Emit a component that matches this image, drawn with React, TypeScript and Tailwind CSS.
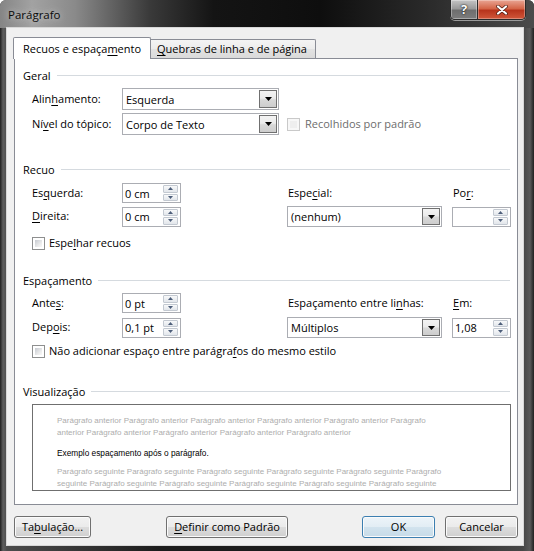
import React from "react";

const U = ({ children }: { children: React.ReactNode }) => (
  <span className="underline decoration-1 underline-offset-[2px]">{children}</span>
);

function Arrow() {
  return (
    <svg width="7" height="4" viewBox="0 0 7 4">
      <path d="M0 0h7L3.5 4z" fill="#000" />
    </svg>
  );
}

function Combo({ value, className }: { value: string; className: string }) {
  return (
    <div className={`flex items-center border border-[#abadb3] bg-white pl-[3px] pr-px ${className}`}>
      <span className="flex-1 leading-none">{value}</span>
      <div className="my-px flex w-[18px] items-center justify-center self-stretch border border-[#707070] bg-[linear-gradient(#f3f3f3,#ebebeb_45%,#d8d8d8_55%,#cdcdcd)]">
        <Arrow />
      </div>
    </div>
  );
}

function Spin({ value, className }: { value: string; className: string }) {
  return (
    <div className={`flex items-center border border-[#abadb3] bg-white pl-[2px] pr-[2px] ${className}`}>
      <span className="flex-1 leading-none">{value}</span>
      <div className="flex w-[15px] flex-col gap-px self-stretch py-px">
        <div className="flex flex-1 items-center justify-center rounded-[1px] border border-[#c3c9d1] bg-[linear-gradient(#f8f9fa,#e2e6eb)]">
          <svg width="5" height="3" viewBox="0 0 5 3">
            <path d="M0 3h5L2.5 0z" fill="#4d5e7a" />
          </svg>
        </div>
        <div className="flex flex-1 items-center justify-center rounded-[1px] border border-[#c3c9d1] bg-[linear-gradient(#f8f9fa,#e2e6eb)]">
          <svg width="5" height="3" viewBox="0 0 5 3">
            <path d="M0 0h5L2.5 3z" fill="#4d5e7a" />
          </svg>
        </div>
      </div>
    </div>
  );
}

function Check({ disabled }: { disabled?: boolean }) {
  return (
    <div
      className={`h-[13px] w-[13px] shrink-0 border p-[2px] ${
        disabled ? "border-[#c9c9c9] bg-[#f7f7f7]" : "border-[#8e8f8f] bg-white"
      }`}
    >
      <div
        className={`h-full w-full ${
          disabled ? "bg-[#eeeeee]" : "bg-[linear-gradient(135deg,#c6cad0,#eeeeee_70%,#f8f8f8)]"
        }`}
      />
    </div>
  );
}

function Group({ title, className }: { title: string; className: string }) {
  return (
    <div className={`flex h-[16px] items-center pl-[8px] pr-[7px] ${className}`}>
      <span className="leading-none">{title}</span>
      <div className="ml-[6px] h-px flex-1 bg-[#d5dadf]" />
    </div>
  );
}

function Btn({
  children,
  className,
  primary,
}: {
  children: React.ReactNode;
  className: string;
  primary?: boolean;
}) {
  return (
    <div
      className={`flex h-[22px] items-center justify-center rounded-[3px] border shadow-[inset_0_0_0_1px_#fbfbfb] ${
        primary
          ? "border-[#3c7fb1] bg-[linear-gradient(#edf4f9,#e2edf4_50%,#d2e3ee_50%,#c6dbe8)]"
          : "border-[#707070] bg-[linear-gradient(#f2f2f2,#ebebeb_50%,#dddddd_50%,#cfcfcf)]"
      } ${className}`}
    >
      {children}
    </div>
  );
}

const anterior1 =
  "Parágrafo anterior Parágrafo anterior Parágrafo anterior Parágrafo anterior Parágrafo anterior Parágrafo";
const anterior2 =
  "anterior Parágrafo anterior Parágrafo anterior Parágrafo anterior Parágrafo anterior";
const seguinte1 =
  "Parágrafo seguinte Parágrafo seguinte Parágrafo seguinte Parágrafo seguinte Parágrafo seguinte Parágrafo";
const seguinte2 =
  "seguinte Parágrafo seguinte Parágrafo seguinte Parágrafo seguinte Parágrafo seguinte Parágrafo seguinte";

export default function App() {
  return (
    <div className="h-[551px] w-[534px] overflow-hidden rounded-t-[6px] bg-[linear-gradient(to_right,#1e1e1e_0px,#5e5e5e_3px,#4c4c4c_7px,#1c1c1c_30%,#1c1c1c_70%,#474747_523px,#5a5a5a_530px,#202020_534px)] font-['Open_Sans',sans-serif] text-[11px] text-black">
      {/* title bar */}
      <div className="flex h-[28px] items-start justify-between bg-[linear-gradient(to_right,#858585,#a2a2a2_6%,#8a8a8a_14%,#3a3a3a_28%,#141414_40%,#0e0e0e_60%,#2a2a2a_80%,#4b4b4b)]">
        <div className="pl-[8px] pt-[7px] text-[11.5px] leading-[16px] text-[#0a0a0a] [text-shadow:0_0_7px_rgba(230,230,230,0.9)]">
          Parágrafo
        </div>
        <div className="mr-[8px] flex h-[20px] overflow-hidden rounded-b-[5px] border border-t-0 border-[#2a2a2a] shadow-[0_1px_0_#9a9a9a]">
          <div className="flex w-[27px] items-center justify-center border-r border-[#2a2a2a] bg-[linear-gradient(#c4c4c4,#9a9a9a_45%,#6e6e6e_55%,#7d7d7d)] shadow-[inset_0_0_0_1px_rgba(255,255,255,0.35)]">
            <span className="text-[13px] font-bold leading-none text-white [text-shadow:0_0_2px_#222,0_0_1px_#000]">?</span>
          </div>
          <div className="flex w-[47px] items-center justify-center bg-[linear-gradient(#e9a594,#d46548_45%,#b8341c_55%,#d1573a)] shadow-[inset_0_0_0_1px_rgba(255,255,255,0.3)]">
            <svg width="12" height="10" viewBox="0 0 12 10">
              <path d="M2 1.5l8 7M10 1.5l-8 7" stroke="#4a1a10" strokeWidth="3.6" strokeLinecap="round" />
              <path d="M2 1.5l8 7M10 1.5l-8 7" stroke="#fff" strokeWidth="2.2" strokeLinecap="round" />
            </svg>
          </div>
        </div>
      </div>

      {/* client area */}
      <div className="ml-[7px] h-[517px] w-[516px] bg-[#f0f0f0] pt-[9px] shadow-[0_0_0_1px_#d8d8d8]">
        {/* tabs */}
        <div className="flex h-[21px] items-end pl-[6px]">
          <div className="relative z-10 -mb-px h-[22px] w-[138px] rounded-t-[2px] border border-b-0 border-[#898c95] bg-white pl-[9px] pt-[4px] leading-[14px]">
            Recuos e espaça<U>m</U>ento
          </div>
          <div className="h-[19px] w-[165px] rounded-tr-[2px] border border-b-0 border-l-0 border-[#898c95] bg-[linear-gradient(#f4f4f4,#ececec_50%,#e2e2e2_50%,#dadada)] pl-[6px] pt-[2px] leading-[14px]">
            <U>Q</U>uebras de linha e de página
          </div>
        </div>

        {/* tab panel */}
        <div className="ml-[7px] h-[447px] w-[504px] border border-[#898c95] bg-white">
          <Group title="Geral" className="mt-[8px]" />
          <div className="mt-[5px] flex h-[22px] items-center pl-[17px]">
            <span className="w-[90px]">
              Alin<U>h</U>amento:
            </span>
            <Combo value="Esquerda" className="h-[22px] w-[157px]" />
          </div>
          <div className="mt-[3px] flex h-[22px] items-center pl-[17px]">
            <span className="w-[90px]">
              Ní<U>v</U>el do tópico:
            </span>
            <Combo value="Corpo de Texto" className="h-[22px] w-[157px]" />
            <div className="ml-[8px] flex items-center">
              <Check disabled />
              <span className="ml-[5px] text-[#6d6d6d]">Recolhidos por padrão</span>
            </div>
          </div>

          <Group title="Recuo" className="mt-[26px]" />
          <div className="mt-[6px] flex h-[20px] items-center pl-[17px]">
            <div className="flex w-[255px] items-center">
              <span className="w-[90px]">
                Es<U>q</U>uerda:
              </span>
              <Spin value="0 cm" className="h-[20px] w-[59px]" />
            </div>
            <span className="w-[165px] pl-px">
              Espe<U>c</U>ial:
            </span>
            <span className="pl-px">
              Po<U>r</U>:
            </span>
          </div>
          <div className="mt-[3px] flex h-[21px] items-center pl-[17px]">
            <div className="flex w-[255px] items-center">
              <span className="w-[90px]">
                <U>D</U>ireita:
              </span>
              <Spin value="0 cm" className="h-[20px] w-[59px]" />
            </div>
            <div className="w-[165px]">
              <Combo value="(nenhum)" className="h-[21px] w-[155px]" />
            </div>
            <Spin value="" className="h-[20px] w-[59px]" />
          </div>
          <div className="mt-[9px] flex h-[14px] items-center pl-[17px]">
            <Check />
            <span className="ml-[4px]">
              Espe<U>l</U>har recuos
            </span>
          </div>

          <Group title="Espaçamento" className="mt-[22px]" />
          <div className="mt-[5px] flex h-[20px] items-center pl-[17px]">
            <div className="flex w-[255px] items-center">
              <span className="w-[90px]">
                Ante<U>s</U>:
              </span>
              <Spin value="0 pt" className="h-[20px] w-[59px]" />
            </div>
            <span className="w-[165px] pl-px">
              Espaçamento entre li<U>n</U>has:
            </span>
            <span className="pl-px">
              <U>E</U>m:
            </span>
          </div>
          <div className="mt-[4px] flex h-[21px] items-center pl-[17px]">
            <div className="flex w-[255px] items-center">
              <span className="w-[90px]">
                Dep<U>o</U>is:
              </span>
              <Spin value="0,1 pt" className="h-[20px] w-[59px]" />
            </div>
            <div className="w-[165px]">
              <Combo value="Múltiplos" className="h-[21px] w-[155px]" />
            </div>
            <Spin value="1,08" className="h-[20px] w-[59px]" />
          </div>
          <div className="mt-[6px] flex h-[14px] items-center pl-[17px]">
            <Check />
            <span className="ml-[4px]">
              Não adicionar espaço entre parágra<U>f</U>os do mesmo estilo
            </span>
          </div>

          <Group title="Visualização" className="mt-[25px]" />
          <div className="ml-[17px] mt-[5px] h-[87px] w-[479px] overflow-hidden border border-[#6f6f6f] bg-white pl-[24px] pt-[10px] font-['Liberation_Sans',sans-serif] text-[8px] leading-[12px]">
            <div className="whitespace-nowrap text-[#adadad]">{anterior1}</div>
            <div className="whitespace-nowrap text-[#adadad]">{anterior2}</div>
            <div className="mt-[8px] whitespace-nowrap text-[8.3px] text-black">Exemplo espaçamento após o parágrafo.</div>
            <div className="mt-[7px] whitespace-nowrap text-[#adadad]">{seguinte1}</div>
            <div className="whitespace-nowrap text-[#adadad]">{seguinte2}</div>
          </div>
        </div>

        {/* buttons */}
        <div className="mt-[11px] flex pl-[7px]">
          <Btn className="w-[77px]">
            Ta<U>b</U>ulação...
          </Btn>
          <Btn className="ml-[75px] w-[122px]">
            <U>D</U>efinir como Padrão
          </Btn>
          <Btn primary className="ml-[74px] w-[73px]">
            OK
          </Btn>
          <Btn className="ml-[10px] w-[73px]">Cancelar</Btn>
        </div>
      </div>
    </div>
  );
}
